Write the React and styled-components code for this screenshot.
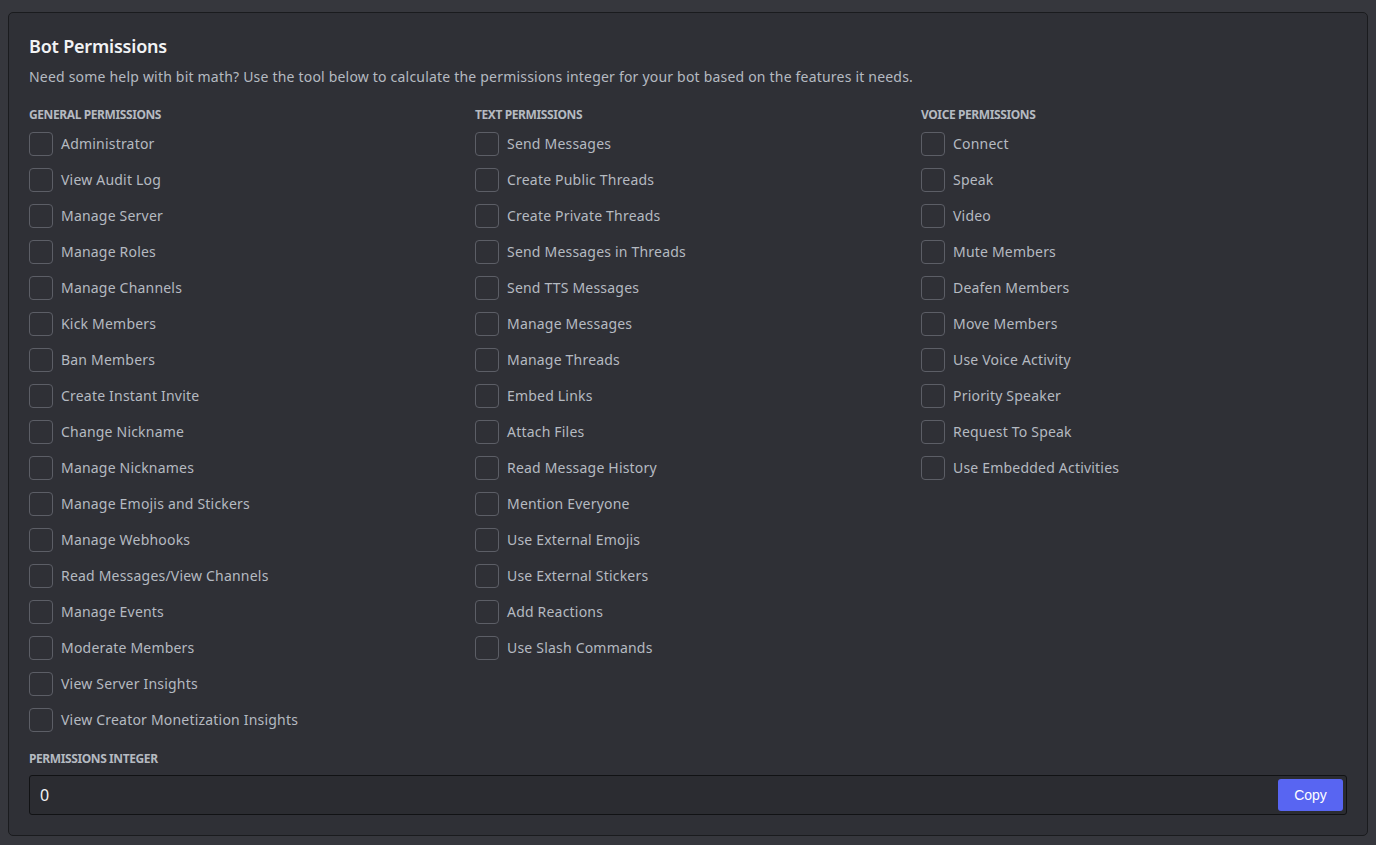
import React, { useState } from "react";
import styled, { createGlobalStyle } from "styled-components";

const GlobalStyle = createGlobalStyle`
  html, body {
    margin: 0;
    background: #36373d;
    font-family: "Noto Sans", "Open Sans", sans-serif;
  }
  * { box-sizing: border-box; }
`;

const general = [
  "Administrator", "View Audit Log", "Manage Server", "Manage Roles",
  "Manage Channels", "Kick Members", "Ban Members", "Create Instant Invite",
  "Change Nickname", "Manage Nicknames", "Manage Emojis and Stickers",
  "Manage Webhooks", "Read Messages/View Channels", "Manage Events",
  "Moderate Members", "View Server Insights", "View Creator Monetization Insights",
];

const text = [
  "Send Messages", "Create Public Threads", "Create Private Threads",
  "Send Messages in Threads", "Send TTS Messages", "Manage Messages",
  "Manage Threads", "Embed Links", "Attach Files", "Read Message History",
  "Mention Everyone", "Use External Emojis", "Use External Stickers",
  "Add Reactions", "Use Slash Commands",
];

const voice = [
  "Connect", "Speak", "Video", "Mute Members", "Deafen Members",
  "Move Members", "Use Voice Activity", "Priority Speaker",
  "Request To Speak", "Use Embedded Activities",
];

const Page = styled.div`
  padding: 12px 8px 9px;
`;

// cartão principal
const Panel = styled.section`
  background: #2f3036;
  border: 1px solid #1a1b1e;
  border-radius: 5px;
  padding: 21px 20px 20px;
`;

const Title = styled.h2`
  margin: 0;
  font-size: 18px;
  line-height: 24px;
  font-weight: 600;
  letter-spacing: -0.2px;
  color: #f2f3f5;
`;

const Description = styled.p`
  margin: 9px 0 20px;
  font-size: 14px;
  line-height: 20px;
  letter-spacing: 0.2px;
  color: #b5bac1;
`;

const Columns = styled.div`
  display: grid;
  grid-template-columns: repeat(3, 1fr);
  gap: 20px;
`;

const Column = styled.div`
  display: flex;
  flex-direction: column;
  gap: 12px;
`;

const Heading = styled.h3`
  margin: 0 0 -3px;
  font-size: 12px;
  line-height: 16px;
  font-weight: 700;
  text-transform: uppercase;
  letter-spacing: -0.4px;
  color: #b5bac1;
`;

const Row = styled.label`
  display: flex;
  align-items: center;
  gap: 8px;
  height: 24px;
  cursor: pointer;
`;

const Box = styled.span`
  width: 24px;
  height: 24px;
  flex: none;
  border: 1px solid ${(p) => (p.$on ? "#5865f2" : "#5c5e66")};
  background: ${(p) => (p.$on ? "#5865f2" : "transparent")};
  border-radius: 4px;
  display: flex;
  align-items: center;
  justify-content: center;
`;

const Label = styled.span`
  font-size: 14px;
  line-height: 20px;
  letter-spacing: 0.2px;
  color: #b5bac1;
`;

const IntegerLabel = styled(Heading)`
  margin: 19px 0 8px;
`;

const InputWrap = styled.div`
  display: flex;
  align-items: center;
  height: 40px;
  border: 1px solid #111214;
  border-radius: 3px;
  background: #2b2c31;
  padding: 0 3px 0 10px;
`;

const Value = styled.div`
  flex: 1;
  font-size: 16px;
  color: #f2f3f5;
`;

const CopyButton = styled.button`
  height: 32px;
  width: 65px;
  border: 0;
  border-radius: 3px;
  background: #5865f2;
  color: #fff;
  font-family: "Liberation Sans", Arial, sans-serif;
  font-size: 14px;
  cursor: pointer;
`;

const Check = () => (
  <svg width="16" height="16" viewBox="0 0 24 24" fill="none" stroke="#fff" strokeWidth="3">
    <path d="M5 12.5l4.5 4.5L19 7.5" />
  </svg>
);

function PermissionColumn({ title, items, checked, toggle }) {
  return (
    <Column>
      <Heading>{title}</Heading>
      {items.map((name) => (
        <Row key={name} onClick={() => toggle(name)}>
          <Box $on={checked[name]}>{checked[name] && <Check />}</Box>
          <Label>{name}</Label>
        </Row>
      ))}
    </Column>
  );
}

export default function App() {
  const [checked, setChecked] = useState({});
  const toggle = (name) => setChecked((c) => ({ ...c, [name]: !c[name] }));
  const total = Object.values(checked).filter(Boolean).length;

  return (
    <Page>
      <GlobalStyle />
      <Panel>
        <Title>Bot Permissions</Title>
        <Description>
          Need some help with bit math? Use the tool below to calculate the permissions integer for your bot based on the features it needs.
        </Description>
        <Columns>
          <PermissionColumn title="General Permissions" items={general} checked={checked} toggle={toggle} />
          <PermissionColumn title="Text Permissions" items={text} checked={checked} toggle={toggle} />
          <PermissionColumn title="Voice Permissions" items={voice} checked={checked} toggle={toggle} />
        </Columns>
        <IntegerLabel>Permissions Integer</IntegerLabel>
        <InputWrap>
          <Value>{total}</Value>
          <CopyButton>Copy</CopyButton>
        </InputWrap>
      </Panel>
    </Page>
  );
}
